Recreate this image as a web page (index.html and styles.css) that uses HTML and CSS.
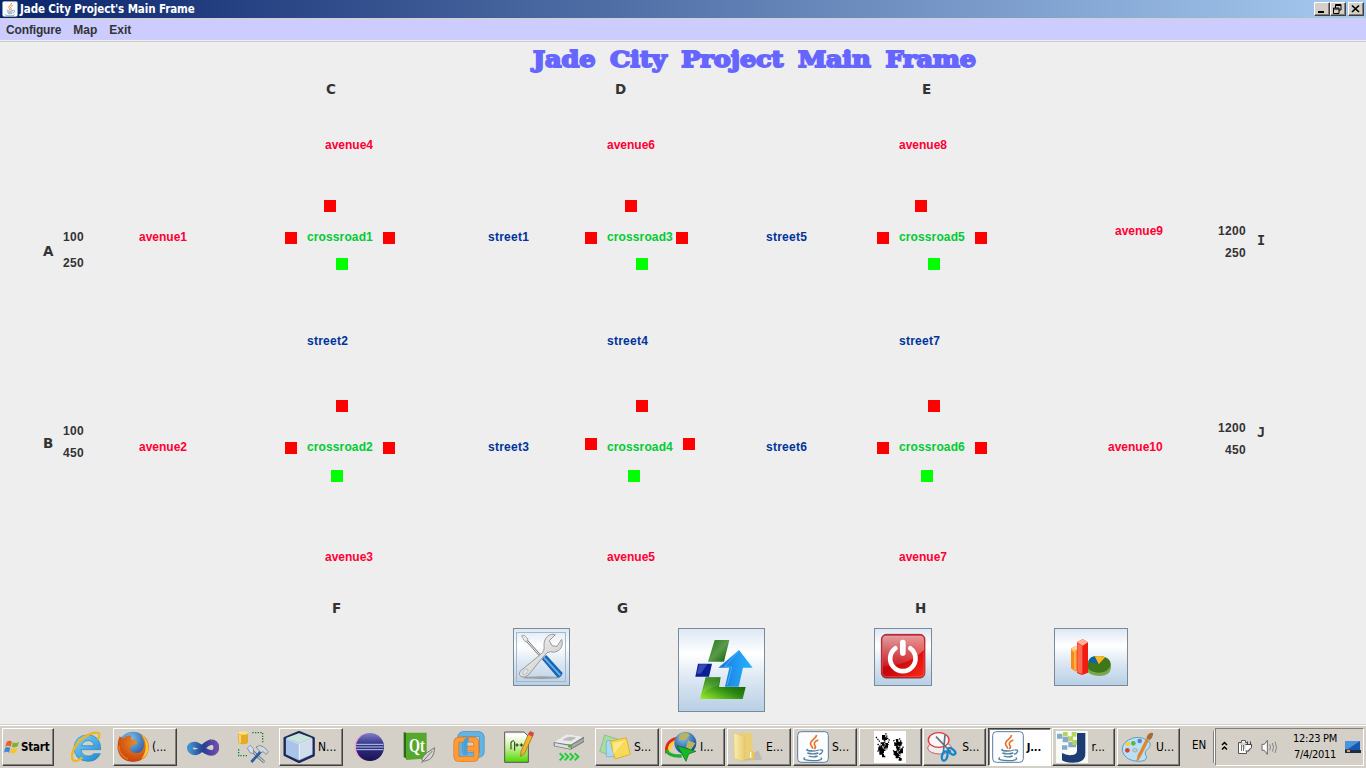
FILE: index.html
```html
<!DOCTYPE html>
<html lang="en">
<head>
<meta charset="utf-8">
<title>Jade City Project's Main Frame</title>
<link rel="stylesheet" href="styles.css">
</head>
<body>
<svg width="0" height="0" class="defs">
  <defs>
    <linearGradient id="gBlue" x1="0" y1="0" x2="1" y2="1"><stop offset="0" stop-color="#7fd4fb"/><stop offset="1" stop-color="#1c86cf"/></linearGradient>
    <linearGradient id="gGreen" x1="0" y1="1" x2="1" y2="0"><stop offset="0" stop-color="#9cf02c"/><stop offset=".5" stop-color="#2c8a12"/><stop offset="1" stop-color="#0b4a04"/></linearGradient>
    <linearGradient id="gLeaf" x1="0" y1="0" x2="1" y2="1"><stop offset="0" stop-color="#1d7a14"/><stop offset=".5" stop-color="#5a9a4c"/><stop offset="1" stop-color="#0c5c05"/></linearGradient>
    <linearGradient id="gRed" x1="0" y1="0" x2="1" y2="1"><stop offset="0" stop-color="#b01018"/><stop offset=".5" stop-color="#c8060c"/><stop offset="1" stop-color="#ff2a18"/></linearGradient>
    <linearGradient id="gShine" x1="0" y1="0" x2="0" y2="1"><stop offset="0" stop-color="#fff" stop-opacity=".6"/><stop offset="1" stop-color="#fff" stop-opacity=".08"/></linearGradient>
    <linearGradient id="gSteel" x1="0" y1="0" x2="1" y2="1"><stop offset="0" stop-color="#fafafa"/><stop offset="1" stop-color="#c4c4c4"/></linearGradient>
    <linearGradient id="gArrow" x1="0" y1="0" x2="1" y2="0"><stop offset="0" stop-color="#1673d8"/><stop offset=".5" stop-color="#2196f0"/><stop offset="1" stop-color="#22b4ff"/></linearGradient>
    <linearGradient id="gFolder" x1="0" y1="0" x2="1" y2="0"><stop offset="0" stop-color="#fbeeb0"/><stop offset="1" stop-color="#e8cc70"/></linearGradient>
    <radialGradient id="gGlobe" cx=".4" cy=".25" r=".8"><stop offset="0" stop-color="#7cc5f3"/><stop offset="1" stop-color="#123a86"/></radialGradient>
    <radialGradient id="gFox" cx=".6" cy=".3" r=".8"><stop offset="0" stop-color="#f08a20"/><stop offset="1" stop-color="#c0390c"/></radialGradient>
    <linearGradient id="gEcl" x1="0" y1="0" x2="0" y2="1"><stop offset="0" stop-color="#7f7fc4"/><stop offset=".4" stop-color="#37348b"/><stop offset="1" stop-color="#191253"/></linearGradient>
    <linearGradient id="gVs" x1="0" y1="0" x2="1" y2="0"><stop offset="0" stop-color="#3f8fd0"/><stop offset=".5" stop-color="#263e90"/><stop offset="1" stop-color="#6d4bad"/></linearGradient>
    <linearGradient id="gPad" x1="0" y1="0" x2="0" y2="1"><stop offset=".1" stop-color="#fff"/><stop offset=".5" stop-color="#c9f09a"/><stop offset="1" stop-color="#4fd800"/></linearGradient>
    <symbol id="java" viewBox="0 0 96 96">
      <rect x="2" y="2" width="92" height="92" rx="11" fill="#fbfcfd" stroke="#5d7d9c" stroke-width="3"/>
      <path d="M58 12C60 24 37 27 41 40C42 45 47 47 47 53M64 27C53 31 48 38 54 44C57 48 54 52 52 54" fill="none" stroke="#e8702a" stroke-width="5"/>
      <path d="M32 54C24 58 36 60 48 60Q58 60 66 57M31 66Q48 71 64 66M35 75Q48 80 62 75M68 57C82 54 78 67 66 70M24 80C12 86 34 89 48 89C66 89 80 85 71 80" fill="none" stroke="#5382a1" stroke-width="4"/>
    </symbol>
  </defs>
</svg>

<header class="titlebar">
  <svg class="title-icon" viewBox="0 0 96 96"><use href="#java"/></svg>
  <span class="title-text">Jade City Project's Main Frame</span>
  <div class="win-buttons">
    <span class="win"><svg viewBox="0 0 14 12"><path d="M3 8h6v2H3z"/></svg></span>
    <span class="win"><svg viewBox="0 0 14 12"><path d="M4.500 5V1.500H10V7H8M4 2.500h6M2.500 5H8v5.500H2.500zM2 6h6" fill="none" stroke="#000"/></svg></span>
    <span class="win win-close"><svg viewBox="0 0 14 12"><path d="M3 2.500l7 6.500M10 2.500L3 9" stroke="#000" stroke-width="1.700"/></svg></span>
  </div>
</header>

<nav class="menubar"><span>Configure</span><span>Map</span><span>Exit</span></nav>

<main class="frame">
  <svg class="map" viewBox="0 42 1366 586">
    <text class="heading" x="533" y="67" textLength="443" lengthAdjust="spacingAndGlyphs">Jade City Project Main Frame</text>
    <g class="node">
      <text x="326" y="94">C</text><text x="615" y="94">D</text><text x="922" y="94">E</text>
      <text x="43" y="256">A</text><text x="43" y="448">B</text>
      <text x="332" y="613">F</text><text x="617" y="613">G</text><text x="915" y="613">H</text>
      <text class="slab" x="1257" y="245">I</text><text class="slab" x="1257" y="437">J</text>
    </g>
    <g class="coord">
      <text x="63" y="241">100</text><text x="63" y="267">250</text>
      <text x="63" y="435">100</text><text x="63" y="457">450</text>
      <text x="1218" y="235">1200</text><text x="1225" y="257">250</text>
      <text x="1218" y="432">1200</text><text x="1225" y="454">450</text>
    </g>
    <g class="avenue">
      <text x="139" y="241">avenue1</text><text x="139" y="451">avenue2</text><text x="325" y="561">avenue3</text>
      <text x="325" y="149">avenue4</text><text x="607" y="561">avenue5</text><text x="607" y="149">avenue6</text>
      <text x="899" y="561">avenue7</text><text x="899" y="149">avenue8</text><text x="1115" y="235">avenue9</text>
      <text x="1108" y="451">avenue10</text>
    </g>
    <g class="crossroad">
      <text x="307" y="241">crossroad1</text><text x="307" y="451">crossroad2</text><text x="607" y="241">crossroad3</text>
      <text x="607" y="451">crossroad4</text><text x="899" y="241">crossroad5</text><text x="899" y="451">crossroad6</text>
    </g>
    <g class="street">
      <text x="488" y="241">street1</text><text x="307" y="345">street2</text><text x="488" y="451">street3</text>
      <text x="607" y="345">street4</text><text x="766" y="241">street5</text><text x="766" y="451">street6</text>
      <text x="899" y="345">street7</text>
    </g>
    <path class="stop" d="M324 200h12v12h-12zM285 232h12v12h-12zM383 232h12v12h-12zM625 200h12v12h-12zM585 232h12v12h-12zM676 232h12v12h-12zM915 200h12v12h-12zM877 232h12v12h-12zM975 232h12v12h-12zM336 400h12v12h-12zM285 442h12v12h-12zM383 442h12v12h-12zM636 400h12v12h-12zM585 438h12v12h-12zM683 438h12v12h-12zM928 400h12v12h-12zM877 442h12v12h-12zM975 442h12v12h-12z"/>
    <path class="go" d="M336 258h12v12h-12zM636 258h12v12h-12zM928 258h12v12h-12zM331 470h12v12h-12zM628 470h12v12h-12zM921 470h12v12h-12z"/>
  </svg>

  <div class="actions">
    <button class="action settings" aria-label="Settings"><svg viewBox="42 42 165 168">
      <rect x="49.500" y="52.500" width="147" height="147" fill="none" stroke="#a3b8cc" stroke-width="3"/>
      <ellipse cx="124" cy="188" rx="56" ry="4" fill="#888" opacity=".7"/>
      <path d="M125 132L139 120L188 174Q184 188 173 188z" fill="#1966b5"/><path d="M132 128L181 181" stroke="#67b4ef" stroke-width="5"/>
      <path d="M76 72L125 127" stroke="#777" stroke-width="7"/><path d="M76 72L125 127" stroke="#f5f5f5" stroke-width="3"/><path d="M65 62l8-1 11 11-5 10-7-6z" fill="#e9e9e9" stroke="#888" stroke-width="2"/>
      <path d="M60 169L122 118Q135 108 132 91C131 67 150 54 166 59L148 77L156 92L171 94L185 73C193 97 174 117 151 110Q140 111 132 123L85 180Q75 190 63 185Q54 179 60 169z" fill="url(#gSteel)" stroke="#999" stroke-width="3"/>
      <ellipse cx="76" cy="170" rx="6" ry="10" transform="rotate(42 76 170)" fill="#dbe6f1" stroke="#aaa" stroke-width="2"/>
    </svg></button>
    <button class="action upload" aria-label="Update"><svg viewBox="537 42 255 246">
      <path d="M644 75H688L672 140H624z" fill="url(#gLeaf)"/><path d="M594 146H636L627 185H586z" fill="#0a1c96"/><path d="M598 148H622L602 176H590z" fill="#5b7bd0" opacity=".5"/>
      <path d="M617 187H662L657 216H737L728 252H600z" fill="url(#gGreen)"/><path d="M619 189H660L655 213Q622 218 607 239z" fill="#fff" opacity=".12"/>
      <path d="M717 105L758 158H729L716 215H675L688 158H655z" fill="url(#gArrow)"/><path d="M717 106L674 156H695L682 209" fill="none" stroke="#79d3ff" stroke-width="3" opacity=".5"/>
    </svg></button>
    <button class="action power" aria-label="Power"><svg viewBox="45 42 168 168">
      <rect x="64" y="62" width="131" height="129" rx="15" fill="#555" opacity=".55"/><rect x="64" y="58" width="131" height="130" rx="15" fill="url(#gRed)" stroke="#9c1017" stroke-width="2"/>
      <path d="M78 62H181Q192 62 192 75V104Q150 150 67 155V75Q67 62 78 62z" fill="url(#gShine)"/>
      <rect x="67" y="61" width="125" height="124" rx="12" fill="none" stroke="#f07070" stroke-width="1.500"/>
      <path d="M106 100A38 38 0 1 0 151 100" fill="none" stroke="#fff" stroke-width="14" stroke-linecap="round"/><path d="M128.500 83V114" stroke="#fff" stroke-width="17" stroke-linecap="round"/>
    </svg></button>
    <button class="action stats" aria-label="Statistics"><svg viewBox="585 42 216 168">
      <path d="M633 101L645 93L657 98V169L645 169L633 160z" fill="#f58b16"/><path d="M633 101L645 93L657 98L645 108z" fill="#ffd797"/><path d="M635 105L645 110V166" fill="none" stroke="#ffc16c" stroke-width="4"/>
      <path d="M684 145Q685 121 716 123Q752 124 753 151V160Q749 184 716 183Q690 182 682 169z" fill="#78a84e"/><path d="M684 145Q687 123 716 123Q751 125 752 149Q746 173 714 173Q688 171 682 157z" fill="#3f761a"/>
      <path d="M716 148L704 124Q720 121 736 126z" fill="#fcb827"/><path d="M715 147L685 140Q690 127 703 124z" fill="#0865ad"/>
      <path d="M651 82L668 72L684 82V173L666 180L651 174z" fill="#f21c10"/><path d="M651 82L668 72L684 82L668 92z" fill="#ffb296"/><path d="M652 85L667 92V177L652 172z" fill="#ff6a52"/>
    </svg></button>
  </div>
</main>

<footer class="taskbar">
  <div class="task start"><svg viewBox="0 0 48 48"><path d="M8 9Q17 2 24 9L20 23Q12 17 4 23z" fill="#e8602c"/><path d="M27 10Q36 15 45 8L41 22Q32 28 23 23z" fill="#7ab52e"/><path d="M3 27Q11 21 19 27L15 41Q8 35 0 41z" fill="#3d8bd4"/><path d="M22 27Q31 32 40 26L36 40Q27 46 18 41z" fill="#fac22b"/></svg><b>Start</b></div>

  <div class="quick"><svg viewBox="213 33 96 96"><path d="M302 89H243Q246 108 265 108Q276 108 281 101H301Q291 124 264 124Q224 122 222 83Q225 46 263 45Q303 46 302 89zM245 77H282Q279 62 264 62Q249 63 245 77z" fill="url(#gBlue)" stroke="#2387bd" stroke-width="2" fill-rule="evenodd"/><path d="M293 59C305 39 295 31 266 44C231 61 207 101 219 120C226 127 238 120 247 113" fill="none" stroke="#f2b51d" stroke-width="7"/></svg></div>

  <div class="task"><svg viewBox="351 33 96 96"><circle cx="399" cy="79" r="44" fill="url(#gGlobe)"/><path d="M359 49L370 56Q380 44 395 47L392 57Q414 61 411 71L390 79Q387 96 408 99Q425 101 431 81Q435 64 422 42Q450 58 446 88Q439 124 399 126Q360 124 353 88Q351 66 359 49z" fill="url(#gFox)"/><path d="M423 42Q449 63 445 91Q439 111 423 119Q444 89 434 61z" fill="#f8ca34"/><path d="M357 78Q355 104 383 118" fill="none" stroke="#e8731c" stroke-width="5"/></svg><span>(...</span></div>

  <div class="quick"><svg viewBox="561 33 96 96"><path d="M634 66C613 69 604 97 586 97C565 97 564 73 584 74C602 75 613 99 635 99C654 97 654 66 634 66" fill="none" stroke="url(#gVs)" stroke-width="17"/></svg></div>
  <div class="quick"><svg viewBox="711 33 96 96"><path d="M715 38H744V69Q730 77 715 69z" fill="#e4ab24"/><ellipse cx="729.500" cy="39" rx="14.500" ry="5" fill="#ffe183"/><path d="M720 44V68" stroke="#ffe07a" stroke-width="5"/><path d="M757 38H788V69M716 88V107H745" fill="none" stroke="#148324" stroke-width="4" stroke-dasharray="4 4"/><path d="M748 85L793 127" stroke="#53647a" stroke-width="8"/><path d="M748 85L793 127" stroke="#c3d0df" stroke-width="4"/><path d="M742 84l9-8 9 10 1 14-10-1z" fill="#d3e0ef" stroke="#65758d" stroke-width="2"/><path d="M787 90L754 126" stroke="#2e5d9d" stroke-width="8"/><path d="M768 81Q777 73 790 80L805 95L799 103L789 95L783 98z" fill="#ced8e4" stroke="#5e6d7e" stroke-width="2"/></svg></div>

  <div class="task"><svg viewBox="37 33 96 96"><path d="M85 36L129 54V106L85 126L42 105V54z" fill="#7891ba" stroke="#1c2857" stroke-width="7" stroke-linejoin="round"/><path d="M46 56L85 72V120L46 103z" fill="#a9c4e9"/><path d="M85 72L125 56V103L85 120z" fill="#cfdded"/><path d="M46 54L85 40L125 54L85 70z" fill="#c8e4dc"/><path d="M86 73V118M47 56L85 72L124 56" fill="none" stroke="#fff" stroke-width="2"/></svg><span>N...</span></div>

  <div class="quick"><svg viewBox="249 33 96 96"><circle cx="295" cy="81" r="42" fill="#f1a8d4"/><circle cx="300" cy="81" r="42" fill="url(#gEcl)"/><path d="M259 73H340M258 81H341M259 89H340" stroke="#b9cce9" stroke-width="3"/></svg></div>
  <div class="quick"><svg viewBox="397 33 96 96"><path d="M399 36L409 40V117L399 111z" fill="#296b14"/><path d="M406 38H468V103L456 116L406 120z" fill="#55a82c"/><text x="415" y="97" class="qt" textLength="47" lengthAdjust="spacingAndGlyphs">Qt</text><path d="M492 83Q491 118 464 123Q446 126 459 107Q467 98 492 83zM452 129L485 93" fill="#d5d5d0" stroke="#777" stroke-width="3"/></svg></div>
  <div class="quick"><svg viewBox="549 33 96 96"><rect x="571" y="42" width="64" height="63" rx="9" fill="none" stroke="#3987bd" stroke-width="17"/><rect x="571" y="42" width="64" height="63" rx="9" fill="none" stroke="#62b4e5" stroke-width="13"/><path d="M619 87V107Q619 117 609 117H569Q559 117 559 107V69Q559 59 569 59H610Q619 59 619 70V86H586" fill="none" stroke="#df6e13" stroke-width="17"/><path d="M619 87V107Q619 117 609 117H569Q559 117 559 107V69Q559 59 569 59H610Q619 59 619 70V86H586" fill="none" stroke="#ff9c35" stroke-width="13"/><path d="M586 105V69Q586 59 596 59" fill="none" stroke="#4a9fd6" stroke-width="13"/></svg></div>
  <div class="quick"><svg viewBox="699 33 96 96"><path d="M704 36H762L775 49V127H704z" fill="url(#gPad)" stroke="#555" stroke-width="3"/><path d="M709 37H758" stroke="#999" stroke-width="5" stroke-dasharray="3 3"/><path d="M723 88V66Q731 58 734 66V92M736 75H746M741 70V80M749 75H759M754 70V80" fill="none" stroke="#173214" stroke-width="3"/><path d="M777 38L790 43L764 100L752 109L753 94z" fill="#f2b32d" stroke="#945c12" stroke-width="2"/><path d="M780 33L792 38L788 50L775 44z" fill="#d8434c"/></svg></div>
  <div class="quick"><svg viewBox="38 33 96 96"><path d="M40 67L80 43L131 51V66L91 89L40 79z" fill="#777"/><path d="M40 66L80 42L130 50L91 74z" fill="#eaeaea"/><path d="M66 61Q82 44 108 53L92 63z" fill="#bbb"/><path d="M43 69L91 78V87L43 77z" fill="#ddd"/><path d="M94 76L130 55V63L94 85z" fill="#aaa"/><circle cx="88" cy="78" r="5" fill="#39bc26"/><path d="M58 100l11 10-11 11M73 100l11 10-11 11M88 100l11 10-11 11M103 100l11 10-11 11" fill="none" stroke="#24cc3c" stroke-width="6"/></svg></div>

  <div class="task"><svg viewBox="177 33 96 96"><path d="M194 45L235 58L216 109L179 94z" fill="#a8dca0" stroke="#77b775" stroke-width="2"/><path d="M199 62H242V110H199z" fill="#a7d8f5" stroke="#72acd1" stroke-width="2"/><path d="M211 64L259 53L271 103L225 117z" fill="#f8d958" stroke="#dab036" stroke-width="3"/><path d="M220 70L255 61L220 103z" fill="#fff09b" opacity=".7"/></svg><span>S...</span></div>
  <div class="task"><svg viewBox="375 33 96 96"><path d="M380 100Q374 64 412 54" fill="none" stroke="#df2b20" stroke-width="9"/><path d="M388 104Q382 70 416 61" fill="none" stroke="#ffd226" stroke-width="8"/><path d="M380 90Q384 109 425 108" fill="none" stroke="#1cad36" stroke-width="10"/><circle cx="436" cy="69" r="33" fill="url(#gGlobe)"/><path d="M418 44Q438 32 450 45L436 60L416 61zM444 61L466 70L452 91L438 82z" fill="#b8b45d"/><path d="M412 77L468 94L446 102L438 124z" fill="#14b927" stroke="#096619" stroke-width="2"/></svg><span>I...</span></div>
  <div class="task"><svg viewBox="573 33 96 96"><path d="M606 122L654 91L667 119z" fill="#888" opacity=".3"/><path d="M596 38L636 39L640 112L607 120z" fill="#e8cf78"/><path d="M581 38L614 50V125L583 116z" fill="url(#gFolder)" stroke="#e0c46e" stroke-width="2"/><rect x="629" y="93" width="14" height="26" rx="6" fill="#efc547"/><path d="M632 96V113" stroke="#fff" stroke-width="4"/></svg><span>E...</span></div>
  <div class="task"><svg viewBox="0 0 96 96"><use href="#java"/></svg><span>S...</span></div>
  <div class="task narrow blank"><svg viewBox="69 33 96 96"><rect x="69" y="33" width="96" height="96" fill="#fff"/><path d="M93 45h10v7h5v8h-5v9h8v14h-7v10h-5v14h4v5h-10v-8h-8V92h-3V80h7V67h9v-8h-5zM134 57h8v8h10v12h-4v8h8v15h-8v14h4v8h-9v-7h-9v-9h-6V93h8V78h-6V68h6z"/><path d="M75 51l13 16M80 72l8 8M80 95l10-18M115 58l-8 30M128 60l10 25M127 91l12 25M157 80l-10 20M104 40l8 20M145 55l8 16" stroke="#000" stroke-width="4" stroke-dasharray="4 3"/><path d="M98 62l5 13-8 9 11 7-9 10M90 72l8 12M142 77l7 11-10 8 8 9-5 12M133 86l8 9" fill="none" stroke="#fff" stroke-width="3" stroke-dasharray="5 3"/></svg></div>
  <div class="task narrow"><svg viewBox="234 33 96 96"><ellipse cx="272" cy="84" rx="36" ry="18" fill="#eee" stroke="#d15d66" stroke-width="3"/><ellipse cx="269" cy="60" rx="31" ry="22" fill="#f7f7f7" stroke="#de3b46" stroke-width="4"/><path d="M261 50L305 96M288 44L283 100" stroke="#607080" stroke-width="5"/><ellipse cx="308" cy="94" rx="13" ry="7" transform="rotate(40 308 94)" fill="none" stroke="#1385cd" stroke-width="7"/><ellipse cx="287" cy="108" rx="8" ry="14" transform="rotate(15 287 108)" fill="none" stroke="#1385cd" stroke-width="7"/></svg><span>S...</span></div>
  <div class="task narrow active"><svg viewBox="0 0 96 96"><use href="#java"/></svg><b>J...</b></div>
  <div class="task narrow"><svg viewBox="618 33 96 96"><rect x="618" y="33" width="96" height="96" fill="#f7faf5"/><path d="M681 39H706V101Q706 128 667 128Q645 128 636 121V99Q650 107 665 105Q681 104 681 92z" fill="#1d3c73"/><path d="M621 41h16v15h-16zM638 50h17v17h-17zM655 66h23v16h-23zM636 76h16v13h-16z" fill="#86a9cc"/><path d="M639 36h14v13h-14zM665 36h14v14h-14zM654 49h15v15h-15zM667 60h14v15h-14z" fill="#b6d35c"/></svg><span>r...</span></div>
  <div class="task narrow"><svg viewBox="61 33 96 96"><path d="M83 60Q112 43 143 62Q154 73 143 86Q128 94 137 109Q141 123 116 124Q75 124 65 94Q62 73 83 60z" fill="#bcdff4" stroke="#5c9fc9" stroke-width="3"/><circle cx="82" cy="72" r="7" fill="#f4d145"/><circle cx="98" cy="70" r="7" fill="#5db63f"/><circle cx="117" cy="63" r="7" fill="#5187cb"/><circle cx="80" cy="91" r="7" fill="#d94133"/><ellipse cx="103" cy="91" rx="7" ry="5" fill="#d4d0c8" stroke="#6899ba" stroke-width="2"/><path d="M145 61L123 105Q113 123 108 125Q108 106 116 96L136 56z" fill="#df872f"/><path d="M137 55Q143 35 157 39Q159 50 147 61z" fill="#a86b37"/></svg><span>U...</span></div>

  <span class="lang">EN</span>
  <div class="tray">
    <svg class="chevron" viewBox="0 0 7 10"><path d="M1 4l2.500-2.500L6 4M1 8.500L3.500 6 6 8.500" fill="none" stroke="#000" stroke-width="1.500"/></svg>
    <svg class="plug" viewBox="0 0 16 16"><path d="M1.500 3.500h3v-2h4v2h2M1.500 3.500v11h8v-2" fill="#fff" stroke="#555"/><path d="M4.500 6v6M6.500 6v6" stroke="#777"/><path d="M8.500 5.500h6v3q-1 2-2.500 2v1.500H8.500M10.500 5V2.500M13.500 5V2.500" fill="#fff" stroke="#444"/></svg>
    <svg class="sound" viewBox="488 57 51 48"><path d="M491 73H498L507 61V103L498 91H491z" fill="#fff" stroke="#666" stroke-width="3"/><path d="M514 73Q519 82 514 91M522 69Q529 82 522 95M530 65Q539 82 530 99" fill="none" stroke="#777" stroke-width="2.500"/></svg>
    <div class="clock"><span>12:23 PM</span><span>7/4/2011</span></div>
    <svg class="desk" viewBox="0 0 16 13"><path d="M0 0h15v11H0z" fill="#1757ad"/><path d="M0 0h15L3 8H0z" fill="#4a94dd"/><path d="M0 9h16v3H0z" fill="#1d2d43"/><path d="M2 10h3" stroke="#ff982b" stroke-width="2"/></svg>
  </div>
</footer>
</body>
</html>
```
FILE: styles.css
```css
* { box-sizing: border-box; }
body {
  margin: 0;
  width: 1366px;
  height: 768px;
  overflow: hidden;
  display: flex;
  flex-direction: column;
  background: #eeeeee;
  font-family: "DejaVu Sans Condensed", "DejaVu Sans", sans-serif;
  font-size: 11px;
  color: #000;
}
svg { display: block; flex: none; }
.defs { position: absolute; }

.titlebar {
  flex: none;
  height: 19px;
  display: flex;
  align-items: center;
  padding: 0 2px 1px;
  background: linear-gradient(90deg, #0a246a, #a6caf0);
  border-bottom: 1px solid #d4d0c8;
}
.title-icon { width: 16px; height: 16px; }
.title-text {
  margin-left: 2px;
  font-size: 11.5px;
  font-weight: bold;
  color: #fff;
  white-space: nowrap;
  letter-spacing: -0.1px;
}
.win-buttons { display: flex; margin-left: auto; }
.win {
  width: 16px;
  height: 14px;
  background: #d4d0c8;
  border: 1px solid;
  border-color: #fff #404040 #404040 #fff;
  box-shadow: inset -1px -1px #808080;
}
.win svg { width: 14px; height: 12px; }
.win-close { margin-left: 2px; }

.menubar {
  flex: none;
  height: 23px;
  display: flex;
  gap: 12px;
  padding: 0 6px;
  background: #ccccff;
  border-bottom: 1px solid #cccccc;
  box-shadow: inset 0 -1px #eeeeee;
  font: bold 12px/23px "Liberation Sans", Arial, sans-serif;
  color: #333;
}
.menubar span:first-child { letter-spacing: -0.15px; }

.frame { flex: none; height: 682px; }
.map { width: 1366px; height: 586px; }
.map text { font: bold 12px "Liberation Sans", Arial, sans-serif; }
.map .heading {
  font: bold 22px "DejaVu Serif", serif;
  word-spacing: 5px;
  fill: #6666ff;
  stroke: #6666ff;
  stroke-width: 1.8px;
}
.map .node text { font: bold 13.5px "DejaVu Sans", sans-serif; fill: #333; }
.map .node .slab { font-family: "DejaVu Sans Mono", monospace; }
.coord { fill: #333; }
.map .coord text { letter-spacing: 0.3px; }
.avenue { fill: #ff0033; }
.crossroad { fill: #00cc33; }
.map .crossroad text { letter-spacing: 0.12px; }
.street { fill: #003399; }
.map .street text { letter-spacing: 0.25px; }
.stop { fill: #ff0000; }
.go { fill: #00ff00; }

.actions { display: flex; align-items: flex-start; padding-left: 513px; }
.action {
  padding: 0;
  border: 1px solid #7a8a99;
  background: linear-gradient(#dde8f3, #ffffff 30%, #dde8f3 60%, #b8cfe5);
  overflow: hidden;
}
.action svg { width: 100%; height: 100%; }
.settings { width: 57px; height: 58px; }
.upload { width: 87px; height: 84px; margin-left: 108px; }
.power { width: 58px; height: 58px; margin-left: 109px; }
.stats { width: 74px; height: 58px; margin-left: 122px; }

.taskbar {
  flex: none;
  height: 44px;
  display: flex;
  align-items: flex-start;
  padding: 2px 2px 0;
  background: #d4d0c8;
  border-top: 1px solid #d4d0c8;
  box-shadow: inset 0 1px #fff;
}
.task {
  flex: none;
  width: 64px;
  height: 38px;
  margin: 1px 1px 0;
  padding-left: 3px;
  display: flex;
  align-items: center;
  gap: 3px;
  border: 1px solid;
  border-color: #fff #404040 #404040 #fff;
  box-shadow: inset -1px -1px #808080;
  white-space: nowrap;
}
.task svg, .quick svg { width: 32px; height: 32px; }
.task span { font-size: 12px; }
.narrow { width: 63px; margin: 1px 1px 0 0.6px; }
.blank { padding-left: 14px; }
.active {
  background: #fff;
  border-color: #404040 #fff #fff #404040;
  box-shadow: inset 1px 1px #808080;
}
.task b { letter-spacing: -0.2px; }
.start { width: 52px; margin: 1px 8px 0 0; padding-left: 1px; gap: 1px; }
.start svg { width: 16px; height: 16px; }
.start b { font-size: 11.5px; }
.quick {
  flex: none;
  width: 50px;
  height: 38px;
  margin-top: 1px;
  display: flex;
  align-items: center;
  justify-content: center;
}
.qt { font: bold 57px "Liberation Serif", serif; fill: #fff; }
.map .qt, .quick .qt { font: bold 57px "Liberation Serif", serif; }
.lang {
  flex: none;
  width: 33px;
  height: 32px;
  margin: 4px 0 0;
  padding-left: 11px;
  line-height: 29px;
  font-size: 11.5px;
  border-right: 1px solid #808080;
  box-shadow: 1px 0 #fff;
}
.tray {
  flex: none;
  width: 149px;
  height: 38px;
  margin: 1px 0 0 auto;
  display: flex;
  align-items: center;
  padding-left: 5px;
  border: 1px solid;
  border-color: #808080 #fff #fff #808080;
}
.chevron { width: 7px; height: 10px; margin-top: -3px; }
.plug { width: 16px; height: 16px; margin-left: 9px; }
.sound { width: 17px; height: 16px; margin-left: 8px; }
.clock {
  width: 58px;
  margin-left: 8px;
  display: flex;
  flex-direction: column;
  align-items: center;
  line-height: 16px;
  white-space: nowrap;
  letter-spacing: -0.3px;
}
.desk { width: 16px; height: 13px; margin-left: 1px; }
```
